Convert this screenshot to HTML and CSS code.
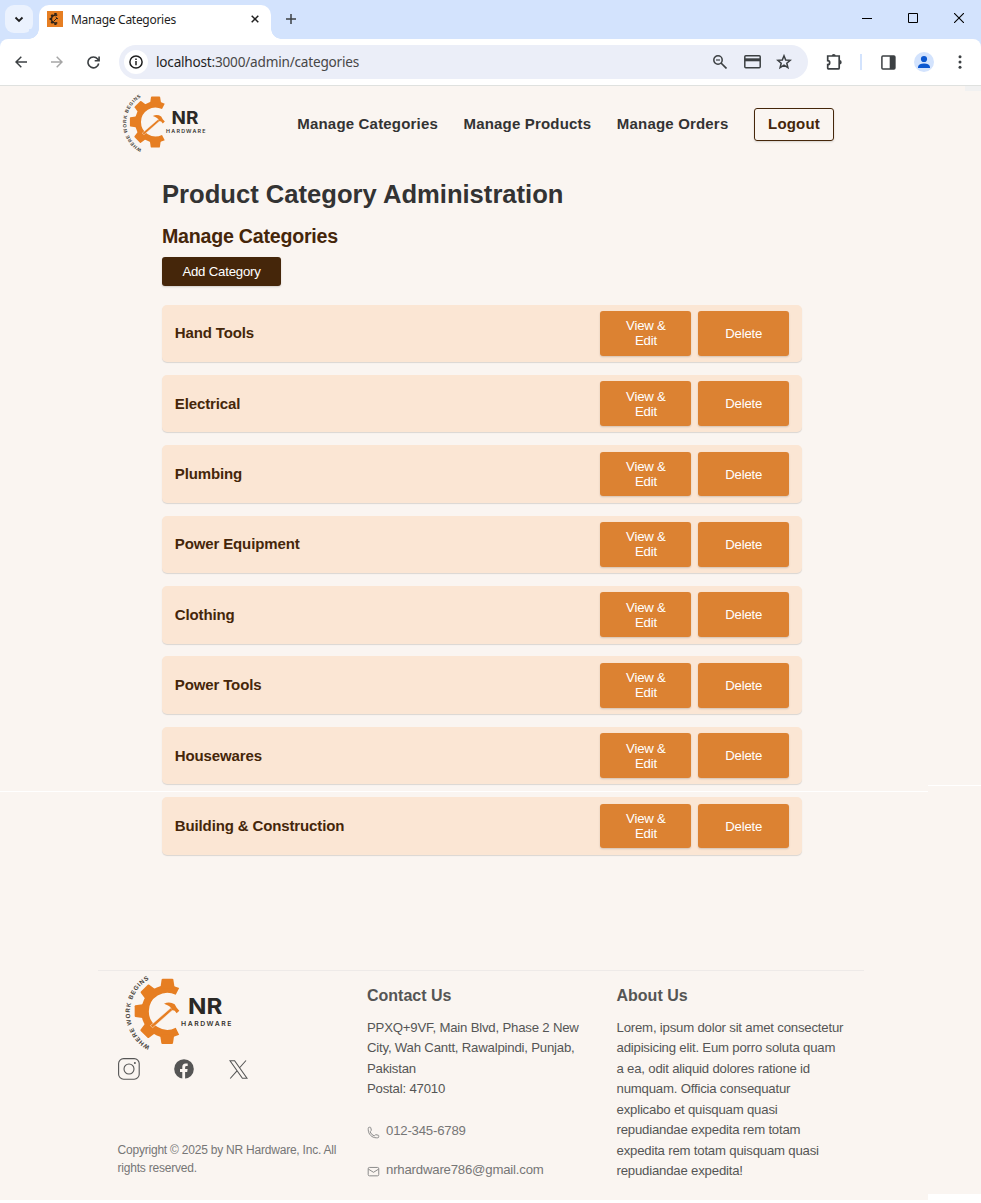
FILE: index.html
```html
<!DOCTYPE html>
<html lang="en">
<head>
<meta charset="utf-8">
<title>Manage Categories</title>
<link rel="stylesheet" href="styles.css">
</head>
<body>
<svg class="defs" width="0" height="0" aria-hidden="true">
  <defs>
    <g id="gear">
      <path d="M246.4 95.3A67 67 0 1 0 246.4 214.7" fill="none" stroke="currentColor" stroke-width="23"/>
      <path id="tooth" d="M195 86L199 59Q200 57 202 57H231Q233 57 234 59L238 86Z" fill="currentColor"/>
      <use href="#tooth" transform="rotate(-45 216 155)"/>
      <use href="#tooth" transform="rotate(-90 216 155)"/>
      <use href="#tooth" transform="rotate(-135 216 155)"/>
      <use href="#tooth" transform="rotate(180 216 155)"/>
    </g>
    <symbol id="logo" viewBox="80 40 330 230">
      <path id="arc" d="M164 260.5A116 116 0 0 1 168 55" fill="none"/>
      <g color="#e67e22"><use href="#gear"/></g>
      <path d="M165 198L226 145L232 151L172 204Z" fill="#e67e22" stroke="#faf5f1" stroke-width="1.5"/>
      <path d="M206 132Q223 124 238 134L244 144L252 153L244 161L238 153L230 151Q226 138 206 132Z" fill="#e67e22"/>
      <text class="motto"><textPath href="#arc" textLength="244">WHERE WORK BEGINS</textPath></text>
      <text class="nr" x="278" y="162" textLength="103" lengthAdjust="spacingAndGlyphs">NR</text>
      <text class="hw" x="257" y="198" textLength="151">HARDWARE</text>
    </symbol>
  </defs>
</svg>

<div class="window">
  <div class="tabbar">
    <div class="tabsearch"><svg width="10" height="7" viewBox="0 0 10 7"><path d="M1.5 1.5L5 5L8.5 1.5" fill="none" stroke="#1f1f1f" stroke-width="1.8"/></svg></div>
    <div class="tab">
      <svg class="favicon" width="16" height="16" viewBox="0 0 16 16"><rect width="16" height="16" fill="#e67e22"/><g color="#2b2118" transform="translate(-4.5 -1.3) scale(.060)"><use href="#gear"/></g><path d="M6.5 10.5L10 7M8.6 6L11 8" stroke="#2b2118"/></svg>
      <span class="tabtitle">Manage Categories</span>
      <svg class="tabclose" width="8" height="8" viewBox="0 0 8 8"><path d="M.7 .7L7.3 7.3M7.3 .7L.7 7.3" stroke="#1f1f1f" stroke-width="1.5"/></svg>
    </div>
    <svg class="newtab" width="10" height="10" viewBox="0 0 10 10"><path d="M5 0V10M0 5H10" stroke="#3c4043" stroke-width="1.5"/></svg>
    <div class="wincontrols">
      <svg width="10" height="10" viewBox="0 0 10 10"><path d="M0 5.5H10" stroke="#000"/></svg>
      <svg width="10" height="10" viewBox="0 0 10 10"><path d="M.5 .5H9.5V9.5H.5Z" fill="none" stroke="#000"/></svg>
      <svg width="10" height="10" viewBox="0 0 10 10"><path d="M0 0L10 10M10 0L0 10" stroke="#000" stroke-width="1.1"/></svg>
    </div>
  </div>
  <div class="toolbar-wrap">
  <div class="toolbar">
    <svg class="nav-back" width="12" height="12" viewBox="0 0 12 12"><path d="M12 6H1M6.3 .7L1 6L6.3 11.3" fill="none" stroke="#3c4043" stroke-width="1.5"/></svg>
    <svg class="nav-fwd" width="12" height="12" viewBox="0 0 12 12"><path d="M0 6H11M5.7 .7L11 6L5.7 11.3" fill="none" stroke="#a6a6a6" stroke-width="1.5"/></svg>
    <svg class="nav-reload" width="13" height="13" viewBox="0 0 13 13"><path d="M11.7 7.5A5.4 5.4 0 1 1 10.6 3L12 4.6M12.1 .4V4.8H7.7" fill="none" stroke="#3c4043" stroke-width="1.6"/></svg>
    <div class="omnibox">
      <div class="siteinfo"><svg width="14" height="14" viewBox="0 0 14 14"><circle cx="7" cy="7" r="6.1" fill="none" stroke="#1f1f1f" stroke-width="1.5"/><path d="M7 6V10.3M7 3.5V5" stroke="#1f1f1f" stroke-width="1.5"/></svg></div>
      <span class="url"><b>localhost</b>:3000/admin/categories</span>
      <svg class="o-zoom" width="14" height="14" viewBox="0 0 14 14"><circle cx="5" cy="5" r="4.2" fill="none" stroke="#3c4043" stroke-width="1.5"/><path d="M3 5H7" stroke="#3c4043" stroke-width="1.2"/><path d="M8 8L13.5 13.5" stroke="#3c4043" stroke-width="1.7"/></svg>
      <svg class="o-card" width="17" height="14" viewBox="0 0 17 14"><rect x=".8" y=".8" width="15.4" height="12" rx="1" fill="none" stroke="#3c4043" stroke-width="1.5"/><path d="M1 4.8H16" stroke="#3c4043" stroke-width="3"/></svg>
      <svg class="o-star" width="16" height="16" viewBox="0 0 16 16"><path d="M8 1.8L9.7 6L14.2 6.3L10.8 9.2L11.9 13.7L8 11.2L4.1 13.7L5.2 9.2L1.8 6.3L6.3 6Z" fill="none" stroke="#3c4043" stroke-width="1.5"/></svg>
    </div>
    <svg class="ext" width="17" height="17" viewBox="0 0 17 17"><path d="M1.7 3H13.2V14.9Q13.2 15.9 12.2 15.9H2.7Q1.7 15.9 1.7 14.9V11.7A2 2 0 0 0 1.7 7.7Z" fill="none" stroke="#3c4043" stroke-width="1.7"/><path d="M5.7 3A2 2 0 0 1 9.7 3ZM13.5 7A2.1 2.1 0 0 1 13.5 11.4Z" fill="#3c4043"/></svg>
    <span class="divider"></span>
    <svg class="panel" width="15" height="15" viewBox="0 0 15 15"><rect x=".9" y=".9" width="13" height="13" rx="1" fill="none" stroke="#3c4043" stroke-width="1.5"/><path d="M8.7 1H14V14H8.7Z" fill="#3c4043"/></svg>
    <svg class="avatar" width="20" height="20" viewBox="0 0 20 20"><circle cx="10" cy="10" r="10" fill="#d3e3fd"/><circle cx="10" cy="7" r="3.1" fill="#0b57d0"/><path d="M4 16V14.5Q5 11.4 10 11.4Q15 11.4 16 14.5V16Z" fill="#0b57d0"/></svg>
    <svg class="kebab" width="4" height="14" viewBox="0 0 4 14"><g fill="#3c4043"><circle cx="2" cy="1.7" r="1.5"/><circle cx="2" cy="7" r="1.5"/><circle cx="2" cy="12.3" r="1.5"/></g></svg>
  </div>
  </div>

  <div class="page">
    <header class="site-header">
      <svg class="logo-small"><use href="#logo"/></svg>
      <nav>
        <a>Manage Categories</a><a>Manage Products</a><a>Manage Orders</a>
        <button class="logout">Logout</button>
      </nav>
    </header>
    <main>
      <h1>Product Category Administration</h1>
      <h2>Manage Categories</h2>
      <button class="btn add">Add Category</button>
      <ul class="rows">
        <li><span>Hand Tools</span><button class="btn">View &amp;<br>Edit</button><button class="btn">Delete</button></li>
        <li><span>Electrical</span><button class="btn">View &amp;<br>Edit</button><button class="btn">Delete</button></li>
        <li><span>Plumbing</span><button class="btn">View &amp;<br>Edit</button><button class="btn">Delete</button></li>
        <li><span>Power Equipment</span><button class="btn">View &amp;<br>Edit</button><button class="btn">Delete</button></li>
        <li><span>Clothing</span><button class="btn">View &amp;<br>Edit</button><button class="btn">Delete</button></li>
        <li><span>Power Tools</span><button class="btn">View &amp;<br>Edit</button><button class="btn">Delete</button></li>
        <li><span>Housewares</span><button class="btn">View &amp;<br>Edit</button><button class="btn">Delete</button></li>
        <li><span>Building &amp; Construction</span><button class="btn">View &amp;<br>Edit</button><button class="btn">Delete</button></li>
      </ul>
    </main>
    <footer>
      <div class="brand">
        <svg class="logo-large"><use href="#logo"/></svg>
        <div class="social">
          <svg width="22" height="22" viewBox="0 0 22 22"><g fill="none" stroke="#555" stroke-width="1.1"><rect x=".6" y=".6" width="20.6" height="20.6" rx="5"/><circle cx="11" cy="11" r="5"/></g><circle cx="16.9" cy="5" r="1" fill="#555"/></svg>
          <svg width="20" height="20" viewBox="0 0 20 20"><circle cx="10" cy="10" r="9.8" fill="#555"/><path d="M8.3 20V13H6V10H8.3V8Q8.3 4.4 11.6 4.4Q12.8 4.4 13.7 4.6V7.1H12.4Q11.1 7.1 11.1 8.4V10H13.6L13.2 13H11.1V20Z" fill="#faf5f1"/></svg>
          <svg width="19" height="19" viewBox="0 0 19 19"><path d="M1 .8H5.6L18 18.2H13.4ZM17 .5L10.4 8M8.2 10.7L1.2 18.5" fill="none" stroke="#555" stroke-width="1.1"/></svg>
        </div>
        <p class="copy">Copyright © 2025 by NR Hardware, Inc. All<br>rights reserved.</p>
      </div>
      <div class="contact">
        <h3>Contact Us</h3>
        <p>PPXQ+9VF, Main Blvd, Phase 2 New<br>City, Wah Cantt, Rawalpindi, Punjab,<br>Pakistan<br>Postal: 47010</p>
        <p class="line phone"><svg width="13" height="13" viewBox="0 0 24 24"><path d="M2.3 6.8c0 8.2 6.7 15 15 15h2.2a2.2 2.2 0 0 0 2.2-2.3v-1.3c0-.6-.3-1-.8-1.1l-4.5-1.1c-.4-.1-.9.1-1.1.4l-1 1.3c-.3.4-.8.5-1.2.4a12 12 0 0 1-7.2-7.1c-.1-.5 0-1 .4-1.3l1.3-1c.4-.2.5-.7.4-1.1L6.9 3.1c-.1-.5-.6-.8-1.1-.8H4.5A2.2 2.2 0 0 0 2.3 4.5Z" fill="none" stroke="#888" stroke-width="1.8"/></svg>012-345-6789</p>
        <p class="line"><svg width="13" height="13" viewBox="0 0 24 24"><g fill="none" stroke="#888" stroke-width="1.8"><rect x="2.2" y="4.5" width="19.5" height="15.5" rx="2.3"/><path d="M2.5 7.5L12 13.5L21.5 7.5"/></g></svg>nrhardware786@gmail.com</p>
      </div>
      <div class="about">
        <h3>About Us</h3>
        <p>Lorem, ipsum dolor sit amet consectetur<br>adipisicing elit. Eum porro soluta quam<br>a ea, odit aliquid dolores ratione id<br>numquam. Officia consequatur<br>explicabo et quisquam quasi<br>repudiandae expedita rem totam<br>expedita rem totam quisquam quasi<br>repudiandae expedita!</p>
      </div>
    </footer>
    <i class="seam seam-left"></i><i class="seam seam-right"></i><i class="corner-top"></i><i class="corner-bottom"></i>
  </div>
</div>
</body>
</html>
```

FILE: styles.css
```css
* { box-sizing: border-box; }
body { margin: 0; background: #fff; font-family: "Liberation Sans", Arial, sans-serif; }
svg { display: block; flex: none; }
.defs { position: absolute; }
h1, h2, h3, p, ul { margin: 0; padding: 0; }
button { font-family: inherit; }
.window { width: 981px; height: 1203px; overflow: hidden; }

.tabbar { height: 39px; background: #d3e3fd; display: flex; }
.tabsearch { width: 28px; height: 28px; margin: 5px 6px 0 5px; border-radius: 9px; background: #ebf2fe; display: flex; align-items: center; justify-content: center; }
.tab { position: relative; width: 232px; height: 34px; margin-top: 5px; background: #fff; border-radius: 10px 10px 0 0; display: flex; align-items: center; padding: 0 12px 6px 8px; }
.tab::before, .tab::after { content: ""; position: absolute; bottom: 0; width: 10px; height: 10px; }
.tab::before { left: -10px; background: radial-gradient(circle at 0 0, #d3e3fd 9.5px, #fff 10px); }
.tab::after { right: -10px; background: radial-gradient(circle at 100% 0, #d3e3fd 9.5px, #fff 10px); }
.tabtitle { font: 12px/16px "Noto Sans", sans-serif; letter-spacing: -.28px; color: #1f1f1f; margin: 2px 0 0 8px; flex: 1; white-space: nowrap; }
.newtab { margin: 14px 0 0 15px; }
.wincontrols { margin: 13px 17px 0 auto; display: flex; gap: 36px; }

.toolbar-wrap { background: #d3e3fd; }
.toolbar { height: 47px; background: #fff; border-bottom: 1px solid #dfe1df; display: flex; align-items: center; border-radius: 8px 8px 0 0; }
.nav-back { margin-left: 15px; }
.nav-fwd { margin-left: 24px; }
.nav-reload { margin-left: 23.5px; }
.omnibox { margin-left: 19.5px; width: 689px; height: 34px; border-radius: 17px; background: #ebeef8; display: flex; align-items: center; padding-left: 5px; }
.siteinfo { width: 24px; height: 24px; border-radius: 50%; background: #fff; display: flex; align-items: center; justify-content: center; }
.url { font: 13.6px/20px "Noto Sans", sans-serif; letter-spacing: -.21px; color: #474747; margin-left: 8px; flex: 1; white-space: nowrap; }
.url b { font-weight: 400; color: #1f1f1f; }
.o-card { margin-left: 17px; }
.o-star { margin: 0 16px 0 15px; }
.ext { margin: -2px 0 0 18px; }
.divider { width: 2px; height: 16px; background: #d3e3fd; margin-left: 17px; }
.panel { margin-left: 18.5px; }
.avatar { margin-left: 18.5px; }
.kebab { margin-left: 24px; }

.page { position: relative; height: 1114px; background: #faf5f1; overflow: hidden; }
.site-header { height: 77px; display: flex; align-items: center; padding: 0 147px 0 120px; justify-content: space-between; }
.logo-small { width: 86px; height: 60px; margin-bottom: 5px; }
.motto { font: 700 18.5px "Liberation Sans", sans-serif; fill: #45423a; }
.nr { font: 700 66px Inter, sans-serif; fill: #2b2926; }
.hw { font: 600 20.5px Inter, sans-serif; fill: #34322f; }
nav { display: flex; align-items: center; gap: 25.6px; font-size: 15px; font-weight: 700; letter-spacing: .18px; color: #333; }
nav a { margin-top: -2px; }
.logout { width: 80px; height: 33px; border: 1px solid #45260a; border-radius: 3px; background: transparent; color: #45260a; font-size: 15px; font-weight: 700; letter-spacing: .18px; padding: 0 0 2px; box-shadow: 0 1px 2px rgba(0,0,0,.15); }
main { width: 640px; margin: 16px 0 0 162px; }
h1 { font-size: 25.6px; line-height: 31px; color: #333; white-space: nowrap; }
h2 { font-size: 19.6px; line-height: 24px; letter-spacing: -.22px; margin-top: 14px; color: #45260a; }
.btn { width: 91px; height: 44.8px; border: 0; border-radius: 3px; padding: 0; background: #dc8232; color: #fff; font-size: 13.2px; letter-spacing: -.2px; line-height: 15px; box-shadow: 0 1px 2px rgba(0,0,0,.16); }
.add { display: block; width: 119px; height: 29px; margin-top: 9px; background: #45260a; }
.rows { list-style: none; display: grid; gap: 12.8px; margin-top: 18.5px; }
.rows li { height: 57.6px; padding: 0 12.8px; display: flex; align-items: center; gap: 6.8px; background: #fbe6d4; border-radius: 5px; box-shadow: 0 1px 1px rgba(0,0,0,.13); }
.rows span { flex: 1; font-size: 15px; font-weight: 700; letter-spacing: -.13px; color: #45260a; padding-bottom: 1px; }

footer { display: flex; width: 766px; margin: 115.5px 0 0 98px; border-top: 1px solid #eeeae8; color: #555; }
footer p { font-size: 13.2px; letter-spacing: -.2px; line-height: 20.48px; }
footer h3 { font-size: 16px; line-height: 20px; margin: 15px 0 11.4px; }
.brand { width: 249.5px; padding: 2px 0 0 19.6px; }
.logo-large { width: 110px; height: 76.7px; margin-left: 4.1px; }
.social { display: flex; align-items: center; gap: 34.5px; margin-top: 8px; }
footer .copy { font-size: 12px; letter-spacing: -.22px; line-height: 18px; margin-top: 61px; color: #767676; white-space: nowrap; }
.contact { width: 249.5px; padding-left: 19.5px; white-space: nowrap; }
.about { padding-left: 19.5px; white-space: nowrap; }
.line { display: flex; align-items: center; gap: 6px; color: #767676; margin-top: 18.3px; }
.line svg { margin-top: 2px; }
footer .phone { margin-top: 21.5px; }

.seam, .corner-top, .corner-bottom { position: absolute; background: #fff; }
.seam { height: 1px; }
.seam-left { left: 0; top: 705px; width: 928px; }
.seam-right { right: 0; top: 699px; width: 53px; }
.corner-top { right: 0; top: 0; width: 16px; height: 5px; background: #f1f1f1; }
.corner-bottom { right: 0; bottom: 0; width: 53px; height: 6px; }
```
